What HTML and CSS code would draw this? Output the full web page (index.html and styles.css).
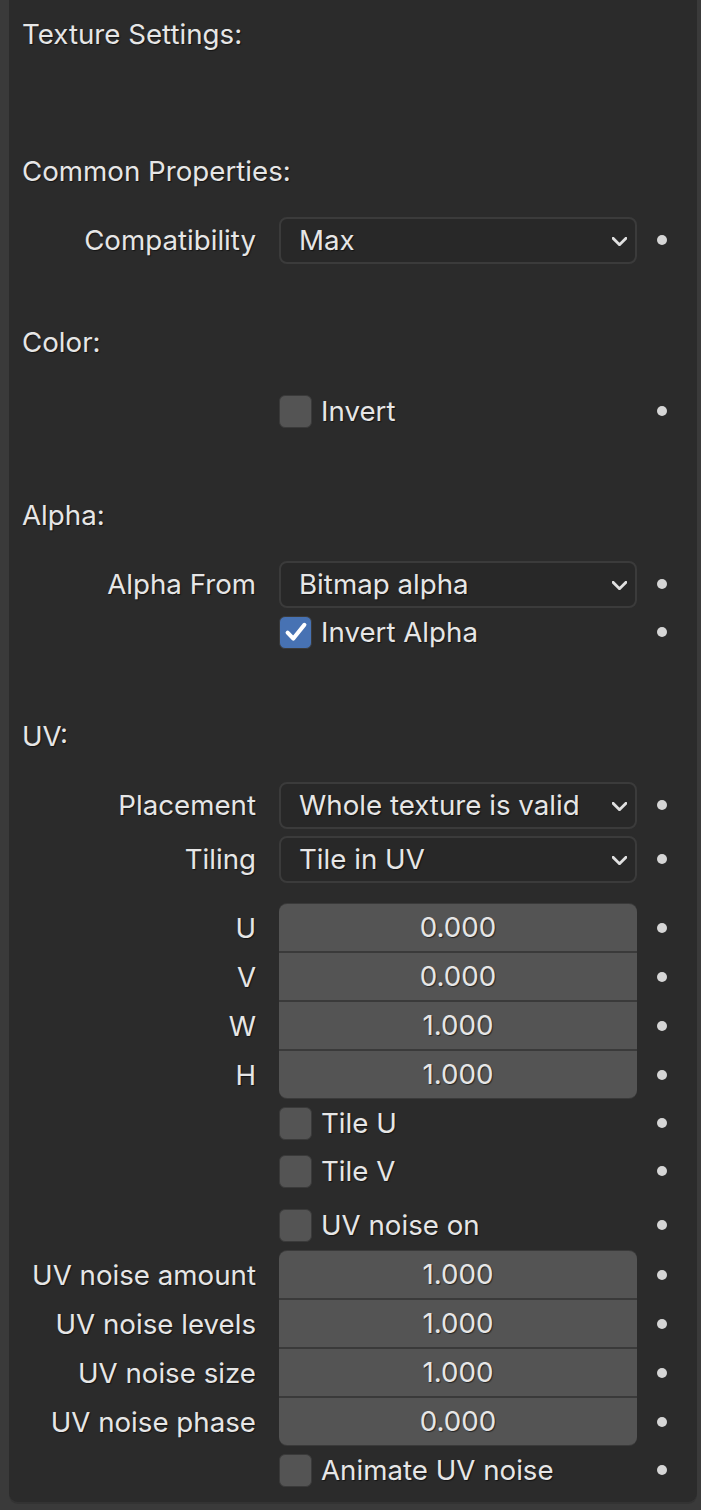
FILE: index.html
```html
<!DOCTYPE html>
<html>
<head>
<meta charset="utf-8">
<link rel="stylesheet" href="styles.css">
</head>
<body>
<div class="panel">
  <div class="heading">Texture Settings:</div>
  <div class="heading h-common">Common Properties:</div>
  <div class="row">
    <div class="label">Compatibility</div>
    <div class="select"><span>Max</span><svg class="chev" viewBox="0 0 14 8"><polyline points="1,1 7,7 13,1"/></svg></div>
    <div class="dotcell"><span class="dot"></span></div>
  </div>

  <div class="heading h-sec">Color:</div>
  <div class="row row-check">
    <div class="label"></div>
    <div class="check"><span class="box"></span><span class="ctext">Invert</span></div>
    <div class="dotcell"><span class="dot"></span></div>
  </div>

  <div class="heading h-sec2">Alpha:</div>
  <div class="row row-sel">
    <div class="label">Alpha From</div>
    <div class="select"><span>Bitmap alpha</span><svg class="chev" viewBox="0 0 14 8"><polyline points="1,1 7,7 13,1"/></svg></div>
    <div class="dotcell"><span class="dot"></span></div>
  </div>
  <div class="row row-check">
    <div class="label"></div>
    <div class="check"><span class="box on"><svg viewBox="0 0 20 20"><polyline points="3,10.5 7.8,15.5 17,4"/></svg></span><span class="ctext">Invert Alpha</span></div>
    <div class="dotcell"><span class="dot"></span></div>
  </div>

  <div class="heading h-sec2">UV:</div>
  <div class="row row-sel">
    <div class="label">Placement</div>
    <div class="select"><span>Whole texture is valid</span><svg class="chev" viewBox="0 0 14 8"><polyline points="1,1 7,7 13,1"/></svg></div>
    <div class="dotcell"><span class="dot"></span></div>
  </div>
  <div class="row row-sel gap6">
    <div class="label">Tiling</div>
    <div class="select"><span>Tile in UV</span><svg class="chev" viewBox="0 0 14 8"><polyline points="1,1 7,7 13,1"/></svg></div>
    <div class="dotcell"><span class="dot"></span></div>
  </div>

  <div class="numgroup g1">
    <div class="nrow first"><div class="label">U</div><div class="num">0.000</div><div class="dotcell"><span class="dot"></span></div></div>
    <div class="nrow"><div class="label">V</div><div class="num">0.000</div><div class="dotcell"><span class="dot"></span></div></div>
    <div class="nrow"><div class="label">W</div><div class="num">1.000</div><div class="dotcell"><span class="dot"></span></div></div>
    <div class="nrow last"><div class="label">H</div><div class="num">1.000</div><div class="dotcell"><span class="dot"></span></div></div>
  </div>

  <div class="row row-check">
    <div class="label"></div>
    <div class="check"><span class="box"></span><span class="ctext">Tile U</span></div>
    <div class="dotcell"><span class="dot"></span></div>
  </div>
  <div class="row row-check">
    <div class="label"></div>
    <div class="check"><span class="box"></span><span class="ctext">Tile V</span></div>
    <div class="dotcell"><span class="dot"></span></div>
  </div>
  <div class="row row-check gap6">
    <div class="label"></div>
    <div class="check"><span class="box"></span><span class="ctext">UV noise on</span></div>
    <div class="dotcell"><span class="dot"></span></div>
  </div>

  <div class="numgroup g2">
    <div class="nrow first"><div class="label">UV noise amount</div><div class="num">1.000</div><div class="dotcell"><span class="dot"></span></div></div>
    <div class="nrow"><div class="label">UV noise levels</div><div class="num">1.000</div><div class="dotcell"><span class="dot"></span></div></div>
    <div class="nrow"><div class="label">UV noise size</div><div class="num">1.000</div><div class="dotcell"><span class="dot"></span></div></div>
    <div class="nrow last"><div class="label">UV noise phase</div><div class="num">0.000</div><div class="dotcell"><span class="dot"></span></div></div>
  </div>

  <div class="row row-check">
    <div class="label"></div>
    <div class="check"><span class="box"></span><span class="ctext">Animate UV noise</span></div>
    <div class="dotcell"><span class="dot"></span></div>
  </div>
</div>
</body>
</html>
```

FILE: styles.css
```css
html, body {
  margin: 0;
  padding: 0;
  background: #3a3a3a;
  width: 701px;
  height: 1510px;
  overflow: hidden;
}
body {
  font-family: "Inter", "Noto Sans", "Liberation Sans", sans-serif;
  font-size: 27.7px;
  color: #e6e6e6;
}
.panel {
  margin-left: 9px;
  width: 688px;
  background: #2b2b2b;
  border-radius: 0 0 9px 9px;
  box-shadow: 0 2px 0 #333333;
  padding-top: 14px;
  padding-bottom: 8px;
  text-shadow: 1px 1px 1px rgba(0,0,0,0.55);
}
.heading {
  height: 40px;
  line-height: 40px;
  padding-left: 13px;
}
.h-common { margin-top: 97px; margin-bottom: 25px; }
.h-sec { margin-top: 58px; margin-bottom: 25px; }
.h-sec2 { margin-top: 60px; margin-bottom: 25px; }

.row, .nrow {
  display: grid;
  grid-template-columns: 247px 23px 358px 50px;
  align-items: center;
  height: 48px;
}
.row > .label, .nrow > .label {
  grid-column: 1;
  text-align: right;
  white-space: nowrap;
}
.row > .select, .row > .check, .nrow > .num { grid-column: 3; }
.row > .dotcell, .nrow > .dotcell { grid-column: 4; }
.gap6 { margin-top: 6px; }

.select {
  height: 47px;
  box-sizing: border-box;
  background: #282828;
  border: 2px solid #3b3b3b;
  border-radius: 8px;
  display: flex;
  align-items: center;
  justify-content: space-between;
  padding: 0 8px 0 18px;
  white-space: nowrap;
}
.chev {
  width: 15px;
  height: 9px;
  fill: none;
  stroke: #e0e0e0;
  stroke-width: 2.6;
  stroke-linecap: square;
  margin-top: 2px;
}
.check {
  display: flex;
  align-items: center;
  height: 48px;
}
.box {
  width: 33px;
  height: 33px;
  box-sizing: border-box;
  background: #545454;
  border: 1px solid #3a3a3a;
  border-radius: 6px;
  margin-right: 9px;
  display: flex;
  align-items: center;
  justify-content: center;
}
.box.on {
  background: #4772b3;
  border-color: #3a3a3a;
}
.box svg {
  width: 24px;
  height: 24px;
  fill: none;
  stroke: #ffffff;
  stroke-width: 3.4;
  stroke-linecap: round;
  stroke-linejoin: round;
}
.ctext { white-space: nowrap; }

.dotcell {
  display: flex;
  justify-content: center;
  align-items: center;
}
.dot {
  width: 10px;
  height: 10px;
  border-radius: 50%;
  background: #d6d6d6;
}

.numgroup {
  display: flex;
  flex-direction: column;
}
.g1 { margin-top: 21px; margin-bottom: 1px; }
.g2 { margin-top: 2px; margin-bottom: 1px; }
.nrow { height: 47px; }
.nrow + .nrow { margin-top: 2px; }
.num {
  height: 47px;
  box-sizing: border-box;
  background: #545454;
  text-align: center;
  line-height: 47px;
  box-shadow: 0 2px 0 #3a3a3a;
}
.nrow.first .num {
  border-radius: 8px 8px 0 0;
  box-shadow: 0 -1px 0 #3a3a3a, 0 2px 0 #3a3a3a;
}
.nrow.last .num {
  border-radius: 0 0 8px 8px;
  box-shadow: 0 1px 0 #3a3a3a;
}
```
